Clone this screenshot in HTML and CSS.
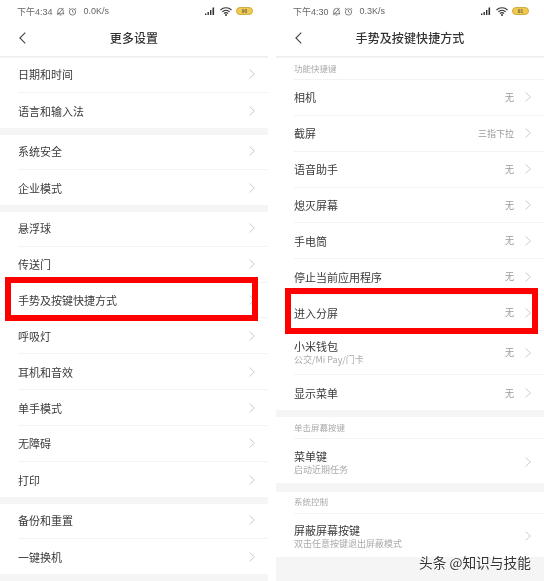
FILE: index.html
```html
<!DOCTYPE html>
<html lang="zh">
<head>
<meta charset="utf-8">
<title>设置</title>
<link rel="stylesheet" href="styles.css">
</head>
<body>
<svg class="defs" width="0" height="0" aria-hidden="true">
  <symbol id="chev" viewBox="0 0 6 10"><path d="M.6 .6 5.400 5 .6 9.400" fill="none" stroke="currentColor" stroke-width=".9"/></symbol>
  <symbol id="back" viewBox="0 0 7 12"><path d="M6.300 .6 .9 6l5.400 5.400" fill="none" stroke="currentColor" stroke-width="1.100"/></symbol>
  <symbol id="bell" viewBox="0 0 10 10"><path d="M2 7.500V4.500a3 3 0 0 1 6 0v3h1H1M4 9h2M1.500 9 8.500 1" fill="none" stroke="currentColor" stroke-width=".9"/></symbol>
  <symbol id="alarm" viewBox="0 0 10 10"><circle cx="5" cy="5.500" r="3.500" fill="none" stroke="currentColor" stroke-width=".9"/><path d="M5 3.500v2l1.500 1M1 2.500 2.500 1M9 2.500 7.500 1" fill="none" stroke="currentColor" stroke-width=".9"/></symbol>
  <symbol id="signal" viewBox="0 0 12 8"><path d="M1 6.500h1.400V8H1zM3.500 5h1.400v3H3.500zM6 3h1.400v5H6zM8.500 .5h1.600V8H8.500z" fill="currentColor"/></symbol>
  <symbol id="wifi" viewBox="0 0 12 9"><path d="M.5 3a8 8 0 0 1 11 0M2.300 4.800a5.500 5.500 0 0 1 7.400 0M4 6.500a3 3 0 0 1 4 0" fill="none" stroke="currentColor" stroke-width="1.100"/><circle cx="6" cy="8" r="1" fill="currentColor"/></symbol>
</svg>
<main class="screens">
  <section class="phone">
    <div class="status">
      <span class="status-left">下午4:34 <svg class="si"><use href="#bell"/></svg> <svg class="si"><use href="#alarm"/></svg> <span class="speed">0.0K/s</span></span>
      <span class="status-right"><svg class="sig"><use href="#signal"/></svg><svg class="wf"><use href="#wifi"/></svg><span class="batt">90</span></span>
    </div>
    <header class="bar"><svg class="back"><use href="#back"/></svg><h1>更多设置</h1></header>
    <div class="group">
      <div class="row"><span class="name">日期和时间</span><svg class="chev"><use href="#chev"/></svg></div>
      <div class="row"><span class="name">语言和输入法</span><svg class="chev"><use href="#chev"/></svg></div>
    </div>
    <div class="group">
      <div class="row"><span class="name">系统安全</span><svg class="chev"><use href="#chev"/></svg></div>
      <div class="row"><span class="name">企业模式</span><svg class="chev"><use href="#chev"/></svg></div>
    </div>
    <div class="group">
      <div class="row"><span class="name">悬浮球</span><svg class="chev"><use href="#chev"/></svg></div>
      <div class="row"><span class="name">传送门</span><svg class="chev"><use href="#chev"/></svg></div>
      <div class="row"><span class="name">手势及按键快捷方式</span><svg class="chev"><use href="#chev"/></svg><i class="mark mark-left"></i></div>
      <div class="row"><span class="name">呼吸灯</span><svg class="chev"><use href="#chev"/></svg></div>
      <div class="row"><span class="name">耳机和音效</span><svg class="chev"><use href="#chev"/></svg></div>
      <div class="row"><span class="name">单手模式</span><svg class="chev"><use href="#chev"/></svg></div>
      <div class="row"><span class="name">无障碍</span><svg class="chev"><use href="#chev"/></svg></div>
      <div class="row"><span class="name">打印</span><svg class="chev"><use href="#chev"/></svg></div>
    </div>
    <div class="group">
      <div class="row"><span class="name">备份和重置</span><svg class="chev"><use href="#chev"/></svg></div>
      <div class="row"><span class="name">一键换机</span><svg class="chev"><use href="#chev"/></svg></div>
    </div>
  </section>
  <section class="phone">
    <div class="status">
      <span class="status-left">下午4:30 <svg class="si"><use href="#bell"/></svg> <svg class="si"><use href="#alarm"/></svg> <span class="speed">0.3K/s</span></span>
      <span class="status-right"><svg class="sig"><use href="#signal"/></svg><svg class="wf"><use href="#wifi"/></svg><span class="batt">91</span></span>
    </div>
    <header class="bar"><svg class="back"><use href="#back"/></svg><h1>手势及按键快捷方式</h1></header>
    <div class="group">
      <div class="label">功能快捷键</div>
      <div class="row"><span class="name">相机</span><span class="val">无</span><svg class="chev"><use href="#chev"/></svg></div>
      <div class="row"><span class="name">截屏</span><span class="val">三指下拉</span><svg class="chev"><use href="#chev"/></svg></div>
      <div class="row"><span class="name">语音助手</span><span class="val">无</span><svg class="chev"><use href="#chev"/></svg></div>
      <div class="row"><span class="name">熄灭屏幕</span><span class="val">无</span><svg class="chev"><use href="#chev"/></svg></div>
      <div class="row"><span class="name">手电筒</span><span class="val">无</span><svg class="chev"><use href="#chev"/></svg></div>
      <div class="row"><span class="name">停止当前应用程序</span><span class="val">无</span><svg class="chev"><use href="#chev"/></svg></div>
      <div class="row"><span class="name">进入分屏</span><span class="val">无</span><svg class="chev"><use href="#chev"/></svg><i class="mark mark-right"></i></div>
      <div class="row row-tall"><span class="name">小米钱包<small>公交/Mi Pay/门卡</small></span><span class="val">无</span><svg class="chev"><use href="#chev"/></svg></div>
      <div class="row"><span class="name">显示菜单</span><span class="val">无</span><svg class="chev"><use href="#chev"/></svg></div>
    </div>
    <div class="group group-wide">
      <div class="label">单击屏幕按键</div>
      <div class="row row-tall row-low"><span class="name">菜单键<small>启动近期任务</small></span><svg class="chev"><use href="#chev"/></svg></div>
    </div>
    <div class="group">
      <div class="label">系统控制</div>
      <div class="row row-tall row-low"><span class="name">屏蔽屏幕按键<small>双击任意按键退出屏蔽模式</small></span><svg class="chev"><use href="#chev"/></svg></div>
    </div>
    <div class="watermark">头条 @知识与技能</div>
  </section>
</main>
</body>
</html>
```

FILE: styles.css
```css
* { box-sizing: border-box; }
html, body { margin: 0; padding: 0; background: #fff; }
body {
  width: 544px;
  height: 581px;
  overflow: hidden;
  font-family: "Noto Sans CJK SC", "Liberation Sans", sans-serif;
  color: #333;
}
.defs { position: absolute; }
.screens { display: flex; gap: 8px; height: 581px; }
.phone {
  position: relative;
  width: 268px;
  height: 581px;
  overflow: hidden;
  background: #f5f5f5;
  display: flex;
  flex-direction: column;
  filter: blur(.4px);
}
.status {
  height: 22px;
  flex: none;
  padding: 0 15px 0 17px;
  background: #fff;
  display: flex;
  justify-content: space-between;
  align-items: center;
  font-size: 9px;
  color: #666;
}
.status-left { display: flex; align-items: center; gap: 3px; font-family: "Liberation Sans", "Noto Sans CJK SC", sans-serif; }
.speed { margin-left: 4px; }
.status-right { display: flex; align-items: center; gap: 4px; color: #333; }
.si { width: 9px; height: 9px; color: #666; }
.sig { width: 12px; height: 8px; }
.wf { width: 12px; height: 9px; }
.batt {
  width: 17px;
  height: 8px;
  border-radius: 4px;
  background: #f2c94c;
  border: 1px solid #cfae45;
  font: 700 5px/6px "Liberation Sans", sans-serif;
  text-align: center;
  color: #665;
}
.bar {
  height: 35px;
  flex: none;
  position: relative;
  padding-bottom: 3px;
  background: #fff;
  border-bottom: 1px solid #eee;
  display: flex;
  align-items: center;
  justify-content: center;
}
.bar h1 { margin: 0; font-size: 12px; font-weight: 500; color: #333; letter-spacing: .1px; }
.back { position: absolute; left: 19px; top: 10px; width: 7px; height: 12px; color: #444; }
.group {
  background: #fff;
  flex: none;
  margin-bottom: 5.2px;
  box-shadow: inset 0 1px #f5f5f5, inset 0 -1px #f5f5f5;
}
.group-wide { margin-bottom: 7px; }
.row {
  position: relative;
  height: 35.86px;
  margin-left: 18px;
  padding-right: 13px;
  border-bottom: 1px solid #f3f3f3;
  display: flex;
  align-items: center;
}
.row-tall { height: 44.3px; }
.group .row:last-child { border-bottom: 0; }
.name { flex: 1; font-size: 11px; line-height: 14px; color: #3a3a3a; }
.name small { display: block; font-size: 9px; line-height: 13px; color: #aaa; }
.row-low .name { padding-top: 3px; }
.row-low .name small { line-height: 14px; }
.val { font-size: 9px; color: #999; margin-right: 11px; }
.chev { width: 6px; height: 10px; color: #c4c4c4; flex: none; }
.label {
  height: 23px;
  margin-left: 18px;
  padding-bottom: 1px;
  display: flex;
  align-items: center;
  border-bottom: 1px solid #f3f3f3;
  font-size: 8.5px;
  color: #aaa;
}
.mark { position: absolute; border: 6px solid #f00; width: 253px; }
.mark-left { left: -13px; top: -6px; height: 44px; }
.mark-right { left: -9px; top: -7px; height: 46px; }
.watermark {
  position: absolute;
  left: 143px;
  top: 552px;
  font-size: 13.7px;
  line-height: 20px;
  color: #333;
  text-shadow: 0 0 2px #fff, 0 0 2px #fff, 0 0 1px #fff;
  white-space: nowrap;
}
```
